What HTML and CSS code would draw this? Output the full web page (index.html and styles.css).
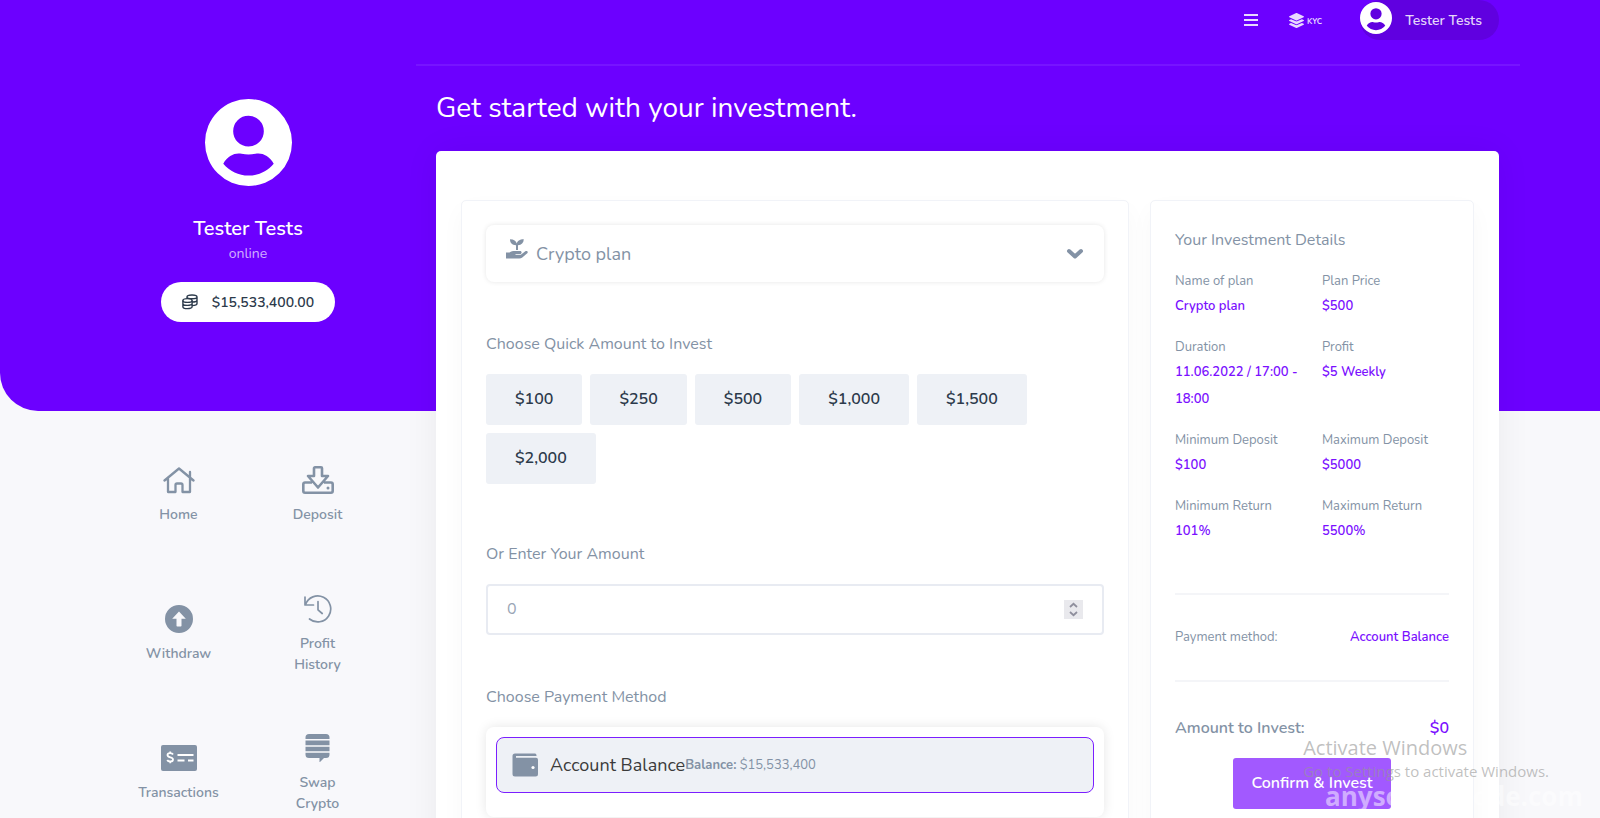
FILE: index.html
```
<!DOCTYPE html>
<html lang="en">

<head>
    <meta charset="UTF-8">
    <meta name="viewport" content="width=device-width, initial-scale=1.0">
    <title>Invest</title>
    <link rel="stylesheet" href="styles.css">
</head>

<body>
    <svg class="sprite" aria-hidden="true">
        <symbol id="user" viewBox="0 0 88 88">
            <path fill-rule="evenodd" d="M44 0a44 44 0 1 0 0 88a44 44 0 1 0 0-88zM44 17a15.500 15.500 0 1 1 0 31a15.500 15.500 0 1 1 0-31zM18.500 65.500C23 57 31 54 37 55.500q7 1.500 14 0C57 54 65 57 69.500 65.500C63 73 54 77.500 44 77.500S25 73 18.500 65.500z"/>
        </symbol>
    </svg>
    <div class="page">
        <div class="container">
            <aside class="sidebar">
                <div class="profile">
                    <svg class="avatar"><use href="#user"/></svg>
                    <h2>Tester Tests</h2>
                    <span class="status">online</span>
                    <a class="balance" href="#">
                        <svg width="16" height="16" viewBox="0 0 16 16" fill="none" stroke="currentColor" stroke-width="1.400">
                            <ellipse cx="5.500" cy="6.500" rx="4.600" ry="1.900"/>
                            <path d="M.9 6.500v6.200c0 2.600 9.200 2.600 9.200 0V6.500M.9 9.500c0 2.500 9.200 2.500 9.200 0M5 4.600V3c0-2.600 10-2.600 10 0v6.500c0 1.400-2 2-4.900 2.100M5 3c0 2.400 10 2.400 10 0M10.500 8c2.500 0 4.500-.7 4.500-1.900"/>
                        </svg>
                        $15,533,400.00
                    </a>
                </div>
                <nav class="menu">
                    <a href="#">
                        <svg width="32" height="28" viewBox="0 0 32 28" fill="none" stroke="currentColor" stroke-width="2.300" stroke-linecap="round" stroke-linejoin="round">
                            <path d="M1.500 14.500L16 2.500l14.500 12M27 6v5M5 12.500V26h7.500v-7c0-1 .5-1.500 1.500-1.500h4c1 0 1.500.5 1.500 1.500v7H27V12.500"/>
                        </svg>
                        Home
                    </a>
                    <a href="#">
                        <svg width="32" height="28" viewBox="0 0 32 28" fill="none" stroke="currentColor" stroke-width="2.600" stroke-linejoin="round">
                            <path d="M13 1.300h6c.6 0 1 .4 1 1V10h6L16 21.500 6 10h6V2.300c0-.6.4-1 1-1zM10 16.500H3c-1 0-1.700.7-1.700 1.700V25c0 1 .7 1.700 1.700 1.700h26c1 0 1.700-.7 1.700-1.700v-6.800c0-1-.7-1.700-1.700-1.700h-7"/>
                            <circle cx="26" cy="22" r="1.500" fill="currentColor" stroke="none"/>
                        </svg>
                        Deposit
                    </a>
                    <a href="#">
                        <svg width="28" height="28" viewBox="0 0 28 28" fill="currentColor">
                            <path fill-rule="evenodd" d="M14 0a14 14 0 1 0 0 28a14 14 0 1 0 0-28zM14 6.500l6.800 7.200h-4.300v7c0 .5-.3.8-.8.8h-3.400c-.5 0-.8-.3-.8-.8v-7H7.200z"/>
                        </svg>
                        Withdraw
                    </a>
                    <a href="#">
                        <svg width="28" height="28" viewBox="0 0 28 28" fill="none" stroke="currentColor" stroke-width="1.700" stroke-linecap="round" stroke-linejoin="round">
                            <path d="M1 2v8h8.500M1.500 9.500A13 13 0 1 1 5.500 24M14 6.500v8.300l4.200 3.700"/>
                        </svg>
                        Profit History
                    </a>
                    <a href="#">
                        <svg width="36" height="28" viewBox="0 0 36 28">
                            <rect y="1" width="36" height="26" rx="2" fill="currentColor"/>
                            <path d="M12 10.500C11 8.500 6.500 8.500 6.500 11c0 3 5.500 1.800 5.500 4.500 0 2.700-4.800 2.500-5.800.5M9.200 7.500v2M9.200 17v2.300M16.500 11h16M16.500 16.500h7M27 16.500h5.500" fill="none" stroke="#fff" stroke-width="1.800"/>
                        </svg>
                        Transactions
                    </a>
                    <a href="#">
                        <svg width="25" height="28" viewBox="0 0 25 28" fill="currentColor">
                            <path d="M4 0h17q3.500 0 3.500 3.500V5H.5V3.500Q.5 0 4 0zM.5 6.500h24v4.700H.5zM.5 12.700h24v4.500H.5zM.5 18.700h24v1.800q0 3.500-3.500 3.500h-2l-4.500 4.500V24H4Q.5 24 .5 20.500z"/>
                        </svg>
                        Swap Crypto
                    </a>
                </nav>
            </aside>

            <div class="content">
                <header class="topbar">
                    <button class="icon-btn" aria-label="Menu">
                        <svg width="14" height="12" viewBox="0 0 14 12" stroke="currentColor" stroke-width="2"><path d="M0 1h14M0 6h14M0 11h14"/></svg>
                    </button>
                    <a class="kyc" href="#">
                        <svg width="15" height="15" viewBox="0 0 512 512" fill="currentColor">
                            <path d="M12.410 148.020l232.940 105.670c6.800 3.090 14.490 3.090 21.290 0l232.940-105.670c16.550-7.510 16.550-32.520 0-40.030L266.650 2.310a25.607 25.607 0 0 0-21.290 0L12.410 107.980c-16.550 7.510-16.550 32.530 0 40.040zm487.180 88.280l-58.090-26.330-161.640 73.270c-7.560 3.430-15.590 5.170-23.860 5.170s-16.290-1.740-23.860-5.170L70.510 209.970l-58.100 26.330c-16.550 7.500-16.550 32.500 0 40l232.940 105.590c6.800 3.080 14.490 3.080 21.290 0L499.590 276.300c16.550-7.500 16.550-32.500 0-40zm0 127.800l-57.870-26.230-161.860 73.370c-7.560 3.430-15.590 5.170-23.860 5.170s-16.290-1.740-23.860-5.170L70.290 337.870 12.410 364.100c-16.550 7.500-16.550 32.500 0 40l232.940 105.590c6.800 3.080 14.490 3.080 21.290 0L499.590 404.100c16.550-7.500 16.550-32.500 0-40z"/>
                        </svg>
                        <span>KYC</span>
                    </a>
                    <a class="user" href="#">
                        <svg><use href="#user"/></svg>
                        Tester Tests
                    </a>
                </header>

                <main>
                    <h1>Get started with your investment.</h1>
                    <div class="card">
                        <form class="panel invest" id="invest">
                            <div class="plan">
                                <svg width="22" height="20" viewBox="0 0 22 20" fill="currentColor">
                                    <path d="M4 .3c4 0 6 1.700 6.800 4.200C11.500 2 13.500.3 17.800.3 17.600 4 15.500 6 12 6.200V11h-2V6.200C6 6 4 4 4 .3zM0 13.500h3.500C6 11.500 8 12 14 12c2.300 0 2 3 0 3H9.500v.8h5.300l4.500-3.500c1.700-1 3.200.6 2 1.900l-5 4.200q-1.300 1-3 1H0z"/>
                                </svg>
                                <select aria-label="Plan">
                                    <option>Crypto plan</option>
                                </select>
                                <svg width="18" height="12" viewBox="0 0 18 12" fill="none" stroke="currentColor" stroke-width="4" stroke-linecap="round" stroke-linejoin="round"><path d="M3 3l6 5.500L15 3"/></svg>
                            </div>

                            <h3>Choose Quick Amount to Invest</h3>
                            <div class="amounts">
                                <button type="button">$100</button>
                                <button type="button">$250</button>
                                <button type="button">$500</button>
                                <button type="button">$1,000</button>
                                <button type="button">$1,500</button>
                                <button type="button">$2,000</button>
                            </div>

                            <label class="title" for="amount">Or Enter Your Amount</label>
                            <div class="field">
                                <input type="number" id="amount" placeholder="0">
                                <svg class="spin" width="19" height="19" viewBox="0 0 19 19" fill="none" stroke="#8f8f9d" stroke-width="1.800"><path d="M6 7l3.500-3.200L13 7M6 12l3.500 3.200L13 12"/></svg>
                            </div>

                            <h3>Choose Payment Method</h3>
                            <div class="methods">
                                <label class="method">
                                    <input type="radio" name="method" checked>
                                    <svg width="26" height="24" viewBox="0 0 26 24">
                                        <path d="M3 .5h20q1.500 0 1.500 2V3H4v1.800h20q2 0 2 2V21q0 2.500-2.500 2.500H3Q.5 23.500.5 21V3Q.5.500 3 .5z" fill="currentColor"/>
                                        <circle cx="21" cy="14.500" r="1.600" fill="#fff"/>
                                    </svg>
                                    <span class="name">Account Balance</span>
                                    <span class="info"><b>Balance:</b> $15,533,400</span>
                                </label>
                            </div>
                        </form>

                        <section class="panel details">
                            <h3>Your Investment Details</h3>
                            <dl>
                                <div><dt>Name of plan</dt><dd>Crypto plan</dd></div>
                                <div><dt>Plan Price</dt><dd>$500</dd></div>
                                <div><dt>Duration</dt><dd>11.06.2022 / 17:00 - 18:00</dd></div>
                                <div><dt>Profit</dt><dd>$5 Weekly</dd></div>
                                <div><dt>Minimum Deposit</dt><dd>$100</dd></div>
                                <div><dt>Maximum Deposit</dt><dd>$5000</dd></div>
                                <div><dt>Minimum Return</dt><dd>101%</dd></div>
                                <div><dt>Maximum Return</dt><dd>5500%</dd></div>
                            </dl>
                            <div class="line">
                                <span>Payment method:</span>
                                <span class="value">Account Balance</span>
                            </div>
                            <div class="line total">
                                <span>Amount to Invest:</span>
                                <span class="value">$0</span>
                            </div>
                            <button class="confirm" form="invest">Confirm &amp; Invest</button>
                        </section>
                    </div>
                </main>
            </div>
        </div>
    </div>

    <div class="notice">
        <p class="notice-title">Activate Windows</p>
        <p>Go to Settings to activate Windows.</p>
    </div>
    <div class="stamp">anysourcecode.com</div>
</body>

</html>
```
FILE: styles.css
```
* {
    box-sizing: border-box;
}

body {
    margin: 0;
    height: 100vh;
    overflow: hidden;
    font-family: Nunito, Lato, sans-serif;
    font-size: 14px;
    line-height: 21px;
    color: #8392a5;
    background: #f8f8fb;
}

h1, h2, h3, p, dl, dd {
    margin: 0;
}

a {
    color: inherit;
    text-decoration: none;
}

button, input, select {
    font: inherit;
    color: inherit;
}

.sprite {
    position: absolute;
    width: 0;
    height: 0;
}

/* purple band behind the header */
.page::before {
    content: "";
    position: absolute;
    top: 0;
    left: 0;
    right: 0;
    height: 411px;
    background: #6c00ff;
    border-bottom-left-radius: 38px;
    z-index: -1;
}

.container {
    display: flex;
    width: 90%;
    margin: 0 auto;
}

.sidebar {
    flex: 0 0 336px;
    padding: 99px 29px 0;
}

.profile {
    display: flex;
    flex-direction: column;
    align-items: center;
    height: 327px;
    color: #fff;
}

.avatar {
    width: 87px;
    height: 87px;
    fill: #fff;
}

.profile h2 {
    margin-top: 29px;
    font-size: 20px;
    font-weight: 600;
    line-height: 28px;
}

.status {
    color: rgba(255, 255, 255, 0.7);
    line-height: 22px;
}

.balance {
    display: flex;
    align-items: center;
    gap: 14px;
    height: 40px;
    margin-top: 17px;
    padding: 0 21px;
    border-radius: 20px;
    background: #fff;
    color: #2c3a4b;
    font-weight: 600;
}

.menu {
    display: grid;
    grid-template-columns: repeat(2, minmax(0, 1fr));
    grid-auto-rows: 139px;
}

.menu a {
    display: flex;
    flex-direction: column;
    align-items: center;
    justify-content: center;
    gap: 10px;
    padding: 0 36px;
    text-align: center;
    font-weight: 600;
}

.menu svg {
    flex: none;
}

.content {
    flex: 1;
    min-width: 0;
}

.topbar {
    display: flex;
    justify-content: flex-end;
    align-items: center;
    height: 66px;
    padding: 0 21px 24px;
    border-bottom: 2px solid rgba(255, 255, 255, 0.08);
    color: rgba(255, 255, 255, 0.85);
}

.icon-btn {
    display: flex;
    padding: 0;
    border: 0;
    background: none;
}

.kyc {
    display: flex;
    align-items: center;
    gap: 3px;
    margin: 0 38px 0 31px;
    font-size: 8px;
    font-weight: 700;
}

.kyc span {
    padding-top: 3px;
}

.user {
    display: flex;
    align-items: center;
    gap: 13px;
    height: 40px;
    padding-right: 17px;
    border-radius: 20px;
    background: #6000e0;
    font-weight: 600;
}

.user svg {
    width: 32px;
    height: 32px;
    margin-bottom: 4px;
    fill: #fff;
}

main {
    padding: 0 21px 0 20px;
}

h1 {
    padding: 22px 0 23px;
    font-size: 28px;
    font-weight: 400;
    line-height: 40px;
    color: #fff;
}

.card {
    display: grid;
    grid-template-columns: 668px minmax(0, 1fr);
    gap: 21px;
    min-height: 800px;
    padding: 49px 25px;
    border-radius: 5px;
    background: #fff;
    box-shadow: 0 0 36px rgba(24, 28, 33, 0.06);
}

.panel {
    padding: 24px;
    border: 1px solid #f1f3f8;
    border-radius: 5px;
    background: #fff;
    box-shadow: 0 10px 24px rgba(24, 28, 33, 0.03);
}

.plan {
    display: flex;
    align-items: center;
    gap: 8px;
    height: 57px;
    margin-bottom: 49px;
    padding: 0 20px;
    border-radius: 8px;
    box-shadow: 0 0 5px rgba(0, 0, 0, 0.1);
}

.plan svg:first-child {
    margin-bottom: 10px;
}

.plan select {
    flex: 1;
    height: 100%;
    padding: 2px 0 0;
    border: 0;
    background: none;
    appearance: none;
    font-size: 18px;
}

h3,
.title {
    display: block;
    font-size: 16px;
    font-weight: 400;
    line-height: 26px;
}

.amounts {
    display: flex;
    flex-wrap: wrap;
    gap: 8px;
    margin: 17px 0 57px;
}

.amounts button {
    height: 51px;
    padding: 0 29px;
    border: 0;
    border-radius: 3px;
    background: #eef1f6;
    color: #2c3a4b;
    font-size: 16px;
    font-weight: 600;
}

.field {
    display: flex;
    align-items: center;
    height: 51px;
    margin: 17px 0 49px;
    padding: 0 19px;
    border: 2px solid #e8ebf2;
    border-radius: 4px;
}

.field input {
    flex: 1;
    min-width: 0;
    padding: 0;
    border: 0;
    outline: 0;
    background: none;
    font-size: 16px;
    appearance: textfield;
}

.field input::placeholder {
    color: #99a5b6;
}

.spin {
    background: #e9e9ed;
}

.methods {
    min-height: 90px;
    margin-top: 17px;
    padding: 10px;
    border-radius: 8px;
    box-shadow: 0 0 12px rgba(0, 0, 0, 0.1);
}

.method {
    display: flex;
    align-items: center;
    height: 56px;
    padding: 0 15px;
    border: 1px solid #7b1fff;
    border-radius: 8px;
    background: #eef1f6;
}

.method input {
    position: absolute;
    opacity: 0;
}

.method .name {
    margin-left: 12px;
    font-size: 18px;
    color: #3b3b3b;
}

.info {
    font-size: 13px;
}

.details {
    display: flex;
    flex-direction: column;
    font-size: 13px;
}

.details h3 {
    line-height: 30px;
}

.details dl {
    display: grid;
    grid-template-columns: 1fr 1fr;
    column-gap: 20px;
    row-gap: 15px;
    margin: 14px 0 48px;
}

.details dt {
    line-height: 24px;
}

.details dd,
.value {
    font-weight: 600;
    line-height: 27px;
    color: #7b10ff;
}

.line {
    display: flex;
    justify-content: space-between;
    align-items: center;
    height: 87px;
    border-top: 2px solid #f4f5f8;
}

.total {
    height: 78px;
    padding-top: 17px;
    font-size: 16px;
    font-weight: 600;
}

.confirm {
    align-self: center;
    height: 51px;
    padding: 0 18px;
    border: 0;
    border-radius: 3px;
    background: #a259ff;
    color: #fff;
    font-size: 16px;
    font-weight: 600;
}

/* overlays on top of the page */
.notice {
    position: absolute;
    right: 51px;
    bottom: 36px;
    font-family: "Open Sans", sans-serif;
    font-size: 15px;
    color: rgba(150, 150, 150, 0.6);
    pointer-events: none;
}

.notice-title {
    font-size: 20px;
    line-height: 26px;
}

.stamp {
    position: absolute;
    right: 17px;
    bottom: 4px;
    font-family: "Open Sans", sans-serif;
    font-size: 26px;
    font-weight: 700;
    line-height: 36px;
    color: rgba(255, 255, 255, 0.5);
    pointer-events: none;
}
```
